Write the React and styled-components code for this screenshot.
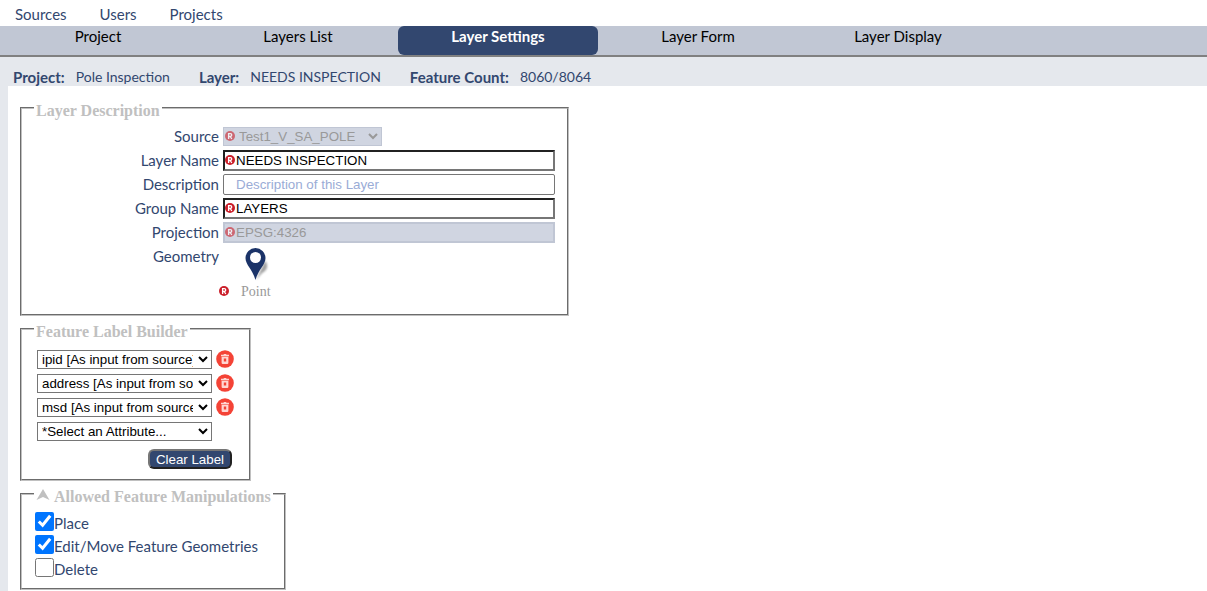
import React from "react";
import styled, { createGlobalStyle } from "styled-components";

const navy = "#32476f";

const GlobalStyle = createGlobalStyle`
  *, *::before, *::after { box-sizing: border-box; }
  html, body, #root { min-height: 100vh; }
  body {
    margin: 0;
    background: #fff;
    color: ${navy};
    font-family: Lato, "Liberation Sans", sans-serif;
    font-size: 15px;
    line-height: 18px;
  }
  #root { display: flex; }
  ul { list-style: none; margin: 0; padding: 0; }
  a { color: inherit; text-decoration: none; }
`;

const Page = styled.div`
  flex: 1;
  display: flex;
  flex-direction: column;
  min-width: 0;
`;

const TopNav = styled.nav`
  display: flex;
  gap: 33px;
  height: 26px;
  padding: 5px 15px 0;
`;

const TabBar = styled.nav`
  background: #c1c7d4;
  border-bottom: 2px solid #808080;
`;

const TabList = styled.ul`
  display: flex;
  margin-left: -2px;
`;

const Tab = styled.a`
  display: block;
  width: 200px;
  height: 29px;
  padding-top: 1px;
  border-radius: 6px;
  text-align: center;
  background: ${(p) => (p.$active ? navy : "transparent")};
  color: ${(p) => (p.$active ? "#fff" : "#000")};
  font-weight: ${(p) => (p.$active ? 700 : 400)};
`;

const InfoBar = styled.dl`
  display: flex;
  gap: 29px;
  margin: 0;
  padding: 11px 13px 0;
  height: 29px;
  background: #e5e8ed;
`;

const InfoItem = styled.div`
  display: flex;
  gap: 11px;
  dt { font-weight: 700; }
  dd { margin: 0; font-size: 14px; }
`;

const Main = styled.main`
  flex: 1;
  display: flex;
  flex-direction: column;
  align-items: flex-start;
  gap: 2px;
  padding: 11px 12px 0;
  border-left: 8px solid #e5e8ed;
`;

const Panel = styled.fieldset`
  width: ${(p) => p.$width}px;
  max-width: 100%;
  min-width: 0;
  margin: 0;
  padding: 0 12px ${(p) => p.$bottom}px;
  border: 2px groove #c0c0c0;
`;

const Legend = styled.legend`
  display: flex;
  align-items: flex-start;
  gap: 4px;
  margin-bottom: 5px;
  padding: 6px 2px 0;
  color: #c0c0c0;
  font: bold 16px/16px "Liberation Serif", serif;
  white-space: nowrap;
`;

const Row = styled.div`
  display: grid;
  grid-template-columns: 185px minmax(0, 1fr);
  column-gap: 4px;
  align-items: center;
  min-height: 24px;
`;

const GeometryRow = styled(Row)`
  align-items: start;
  padding-top: 3px;
`;

const RowLabel = styled.label`
  text-align: right;
`;

const Control = styled.div`
  position: relative;
  display: flex;
`;

const Badge = styled.svg`
  width: 10px;
  height: 10px;
  flex: none;
  opacity: ${(p) => (p.$faded ? 0.6 : 1)};
`;

const InnerBadge = styled(Badge)`
  position: absolute;
  left: 2px;
  top: 50%;
  margin-top: -5px;
  pointer-events: none;
`;

const TextInput = styled.input`
  width: 100%;
  height: 21px;
  padding: 1px 2px 1px 11px;
  border: 2px inset #767676;
  border-radius: 0;
  background: #fff;
  color: #000;
  font-family: "Liberation Sans", sans-serif;
  &:placeholder-shown {
    padding-left: 12px;
    border: 1px solid #767676;
    border-radius: 2px;
  }
  &::placeholder { color: #9aacd6; }
  &:disabled {
    background: #d0d5e1;
    border: 2px solid #c0c6d4;
    color: #999;
  }
`;

const Select = styled.select`
  width: ${(p) => p.$width}px;
  height: 19px;
  padding-right: 2px;
  border: 1px solid #767676;
  background: #fff;
  color: #000;
  font-family: "Liberation Sans", sans-serif;
`;

const SourceSelect = styled(Select)`
  padding-left: 11px;
  background: #d0d5e1;
  border-color: #c0c6d4;
  color: #999;
  opacity: 1;
`;

const Geometry = styled.div`
  display: flex;
  align-items: flex-end;
  gap: 12px;
  margin-left: -4px;
  > ${Badge} { margin-bottom: 4px; }
`;

const GeometryType = styled.figure`
  display: flex;
  flex-direction: column;
  align-items: center;
  gap: 2px;
  margin: 0;
  figcaption {
    color: #999;
    font: 14px/16px "Liberation Serif", serif;
  }
`;

const LabelList = styled.ul`
  && { padding: 2px 0 0 3px; }
`;

const LabelItem = styled.li`
  display: flex;
  align-items: center;
  gap: 4px;
  height: 24px;
`;

const IconButton = styled.button`
  display: flex;
  padding: 0;
  border: 0;
  background: none;
  cursor: pointer;
`;

const Actions = styled.div`
  display: flex;
  justify-content: flex-end;
  padding: 6px 5px 0 0;
`;

const ClearButton = styled.button`
  width: 84px;
  height: 20px;
  padding: 0;
  border: 2px outset #767676;
  border-radius: 6px;
  background: ${navy};
  color: #fff;
  font-family: "Liberation Sans", sans-serif;
  cursor: pointer;
`;

const CheckRow = styled.label`
  display: flex;
  align-items: center;
  height: 23px;
  padding-left: 1px;
`;

const CheckText = styled.span`
  padding-top: 2px;
`;

const Checkbox = styled.input`
  width: 19px;
  height: 19px;
  margin: 0;
`;

const Required = ({ as: Shape = Badge, faded }) => (
  <Shape viewBox="0 0 10 10" $faded={faded} aria-hidden="true">
    <circle cx="5" cy="5" r="5" fill="#cb1f2a" />
    <path d="M3.6 8V2.6h1.7a1.4 1.4 0 0 1 0 2.9H3.6M5.2 5.5L6.8 8" fill="none" stroke="#fff" strokeWidth="1.3" />
  </Shape>
);

const Pin = () => (
  <svg width="26" height="35" viewBox="0 0 26 35" aria-hidden="true">
    <defs>
      <filter id="soft" x="-50%" y="-50%" width="200%" height="200%">
        <feGaussianBlur stdDeviation="1.2" />
      </filter>
    </defs>
    <path d="M13 33L22 14C26 18 24 24 19 26Z" fill="#777" opacity=".7" filter="url(#soft)" />
    <path fill="#1b3368" d="M12.5 1a10 10 0 0 1 10 10c0 7-7 11-10 22C9.500 22 2.500 18 2.500 11A10 10 0 0 1 12.500 1Z" />
    <circle cx="12.5" cy="10.5" r="5.500" fill="#fff" />
  </svg>
);

const Trash = () => (
  <svg width="18" height="18" viewBox="0 0 18 18" aria-hidden="true">
    <circle cx="9" cy="9" r="8.800" fill="#f44336" />
    <path d="M5 4.800h2.400l.6-.8h2l.6.8H13v1.400H5Z" fill="#ffd6d2" />
    <path fillRule="evenodd" d="M5.600 6.800h6.800v6a1.200 1.200 0 0 1-1.200 1.200H6.800a1.200 1.200 0 0 1-1.200-1.200ZM7.800 8.600v3h2.400v-3Z" fill="#ffd6d2" />
  </svg>
);

const Chevron = () => (
  <svg width="14" height="12" viewBox="0 0 14 12" aria-hidden="true">
    <path d="M7 0L13.500 11L7 8L.5 11Z" fill="#c0c0c0" />
  </svg>
);

const topLinks = ["Sources", "Users", "Projects"];
const tabs = ["Project", "Layers List", "Layer Settings", "Layer Form", "Layer Display"];
const info = [
  ["Project:", "Pole Inspection"],
  ["Layer:", "NEEDS INSPECTION"],
  ["Feature Count:", "8060/8064"],
];
const fields = [
  { id: "name", label: "Layer Name", value: "NEEDS INSPECTION", required: true },
  { id: "description", label: "Description", placeholder: "Description of this Layer" },
  { id: "group", label: "Group Name", value: "LAYERS", required: true },
  { id: "projection", label: "Projection", value: "EPSG:4326", required: true, disabled: true },
];
const attributes = ["ipid", "address", "msd"];
const manipulations = [
  ["Place", true],
  ["Edit/Move Feature Geometries", true],
  ["Delete", false],
];

export default function App() {
  return (
    <Page>
      <GlobalStyle />
      <TopNav aria-label="Main">
        {topLinks.map((t) => <a key={t} href="#">{t}</a>)}
      </TopNav>
      <TabBar aria-label="Project sections">
        <TabList>
          {tabs.map((t) => (
            <li key={t}><Tab href="#" $active={t === "Layer Settings"}>{t}</Tab></li>
          ))}
        </TabList>
      </TabBar>
      <InfoBar>
        {info.map(([k, v]) => (
          <InfoItem key={k}><dt>{k}</dt><dd>{v}</dd></InfoItem>
        ))}
      </InfoBar>
      <Main>
        <Panel $width={549} $bottom={14}>
          <Legend>Layer Description</Legend>
          <Row>
            <RowLabel htmlFor="source">Source</RowLabel>
            <Control>
              <SourceSelect id="source" $width={159} disabled>
                <option>Test1_V_SA_POLE</option>
              </SourceSelect>
              <Required as={InnerBadge} faded />
            </Control>
          </Row>
          {fields.map((f) => (
            <Row key={f.id}>
              <RowLabel htmlFor={f.id}>{f.label}</RowLabel>
              <Control>
                <TextInput id={f.id} defaultValue={f.value} placeholder={f.placeholder} disabled={f.disabled} />
                {f.required && <Required as={InnerBadge} faded={f.disabled} />}
              </Control>
            </Row>
          ))}
          <GeometryRow>
            <RowLabel as="span">Geometry</RowLabel>
            <Geometry>
              <Required />
              <GeometryType>
                <Pin />
                <figcaption>Point</figcaption>
              </GeometryType>
            </Geometry>
          </GeometryRow>
        </Panel>

        <Panel $width={231} $bottom={10}>
          <Legend>Feature Label Builder</Legend>
          <LabelList>
            {attributes.map((a) => (
              <LabelItem key={a}>
                <Select $width={175} aria-label={`Attribute ${a}`}>
                  <option>{a} [As input from source]</option>
                </Select>
                <IconButton type="button" aria-label={`Remove ${a}`}><Trash /></IconButton>
              </LabelItem>
            ))}
            <LabelItem>
              <Select $width={175} aria-label="Add attribute">
                <option>*Select an Attribute...</option>
              </Select>
            </LabelItem>
          </LabelList>
          <Actions><ClearButton type="button">Clear Label</ClearButton></Actions>
        </Panel>

        <Panel $width={266} $bottom={9}>
          <Legend><Chevron />Allowed Feature Manipulations</Legend>
          {manipulations.map(([name, on]) => (
            <CheckRow key={name}>
              <Checkbox type="checkbox" defaultChecked={on} />
              <CheckText>{name}</CheckText>
            </CheckRow>
          ))}
        </Panel>
      </Main>
    </Page>
  );
}
